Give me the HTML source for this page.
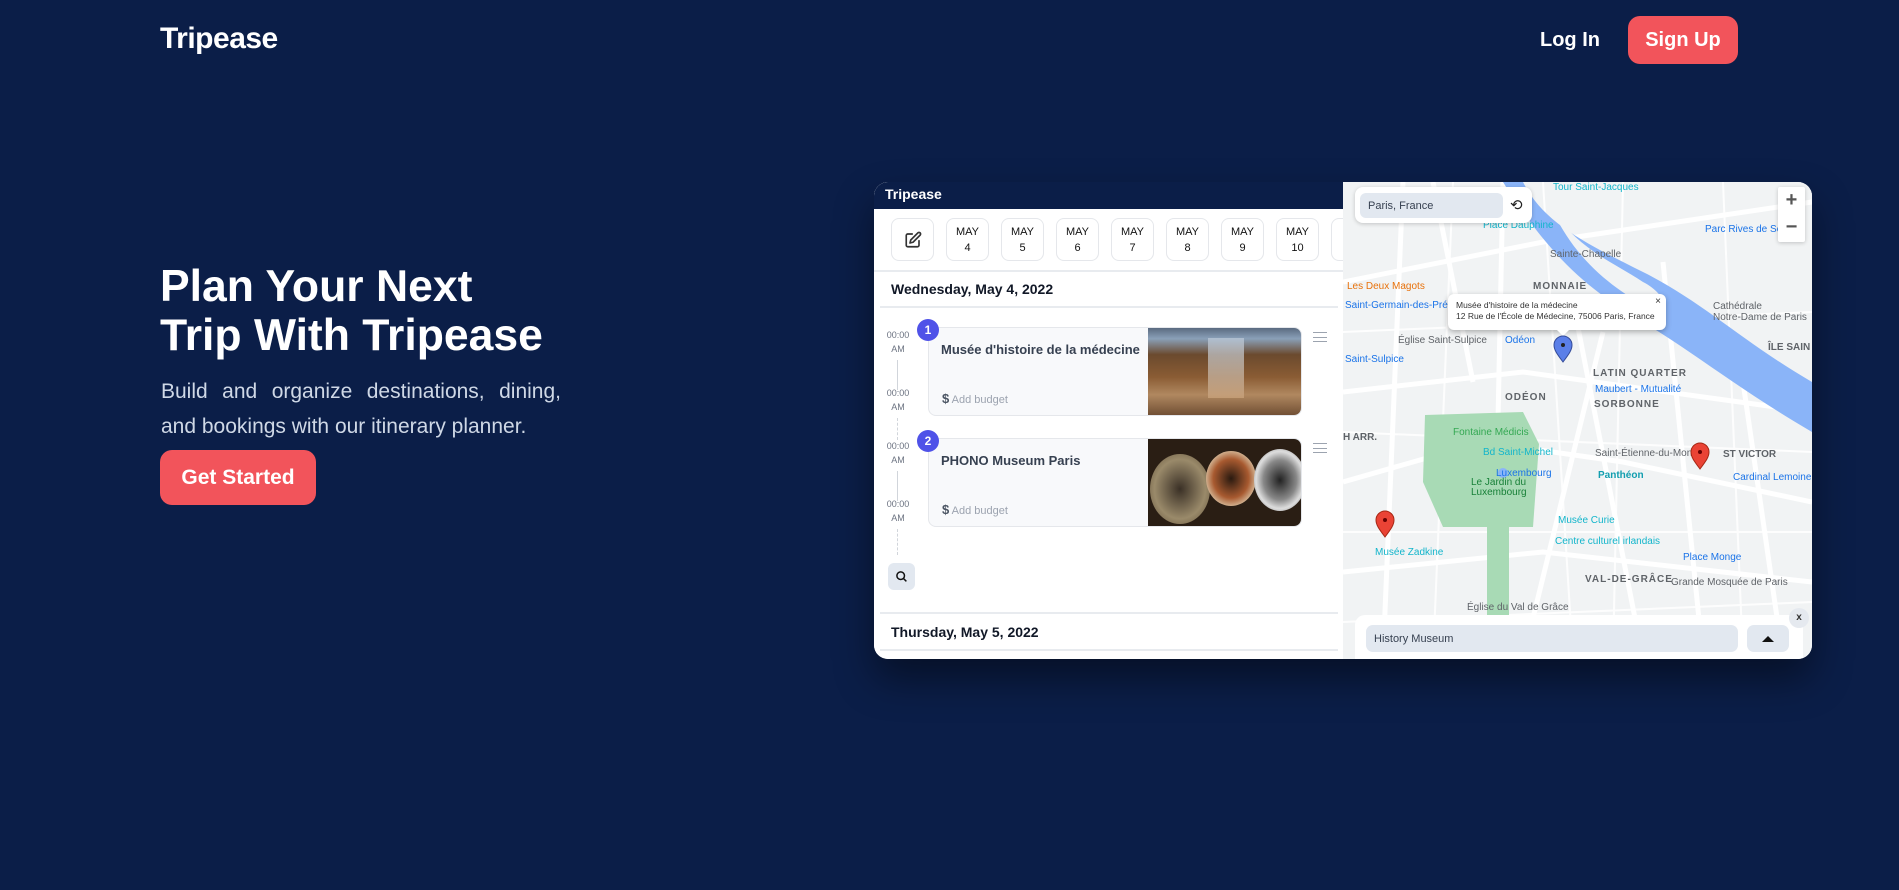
<!DOCTYPE html>
<html><head><meta charset="utf-8"><style>
*{margin:0;padding:0;box-sizing:border-box}
body{width:1899px;height:890px;background:#0b1e48;font-family:"Liberation Sans",sans-serif;position:relative;overflow:hidden;color:#fff}
.abs{position:absolute}
.logo{left:160px;top:22px;font-size:30px;font-weight:bold;letter-spacing:-0.5px}
.login{left:1540px;top:29px;font-size:20px;font-weight:bold}
.signup{left:1628px;top:16px;width:110px;height:48px;background:#f2545b;border-radius:12px;font-size:20px;font-weight:bold;text-align:center;line-height:48px}
h1{position:absolute;left:160px;top:262px;font-size:44.5px;line-height:49px;font-weight:bold}
.para{left:161px;top:374px;width:400px;font-size:21px;line-height:35px;color:#cfd8e6;text-align:justify;text-align-last:left}
.gs{left:160px;top:450px;width:156px;height:55px;background:#f2545b;border-radius:12px;font-size:21px;font-weight:bold;text-align:center;line-height:55px}
.app{left:874px;top:182px;width:938px;height:477px;border-radius:14px;overflow:hidden;background:#fff;box-shadow:0 20px 40px rgba(0,0,0,.45)}
.left{position:absolute;left:0;top:0;width:469px;height:477px;background:#fff;color:#1f2937}
.hdr{position:absolute;left:0;top:0;width:469px;height:27px;background:#0b1e48;color:#fff;font-size:14px;font-weight:bold;padding:4px 11px}
.chip{position:absolute;top:36px;width:43px;height:43px;border:1px solid #e5e7eb;border-radius:8px;font-size:11px;text-align:center;line-height:16px;padding-top:5px;color:#111}
.line{position:absolute;left:0;height:2px;background:#e8ebef}
.day{position:absolute;left:17px;font-size:14px;font-weight:bold;color:#111827}
.time{position:absolute;left:4px;width:40px;text-align:center;font-size:9px;color:#6b7280;line-height:14px}
.card{position:absolute;left:54px;width:374px;height:89px;border:1px solid #e5e7eb;border-radius:8px;background:#f8f9fb;overflow:hidden}
.card .t{position:absolute;left:12px;top:14px;font-size:13px;font-weight:bold;color:#374151}
.card .b{position:absolute;left:13px;top:63px;font-size:11px;color:#9ca3af}
.card .b span{color:#4b5563;font-size:13px;font-weight:bold}
.card .img{position:absolute;left:219px;top:0;width:155px;height:89px}
.badge{position:absolute;left:43px;width:22px;height:22px;border-radius:50%;background:#4f52e8;color:#fff;font-size:12px;font-weight:bold;text-align:center;line-height:22px}
.ham{position:absolute;left:439px;width:14px;height:10px;border-top:1px solid #9ca3af;border-bottom:1px solid #9ca3af}
.ham:after{content:"";position:absolute;left:0;top:4px;width:14px;border-top:1px solid #9ca3af}
.map{position:absolute;left:469px;top:0;width:469px;height:477px;background:#f1f3f4;overflow:hidden}
.ml{position:absolute;font-size:10px;white-space:nowrap}
</style></head><body>
<div class="abs logo">Tripease</div>
<div class="abs login">Log In</div>
<div class="abs signup">Sign Up</div>
<h1>Plan Your Next<br>Trip With Tripease</h1>
<div class="abs para">Build and organize destinations, dining, and bookings with our itinerary planner.</div>
<div class="abs gs">Get Started</div>

<div class="abs app">
 <div class="left">
  <div class="hdr">Tripease</div>
  <div class="chip" style="left:17px;padding-top:12px"><svg width="18" height="18" viewBox="0 0 24 24" fill="none" stroke="#333" stroke-width="2.2" stroke-linecap="round" stroke-linejoin="round"><path d="M11 4H5a2 2 0 0 0-2 2v13a2 2 0 0 0 2 2h13a2 2 0 0 0 2-2v-6"/><path d="M18.5 2.5a2.1 2.1 0 0 1 3 3L12 15l-4 1 1-4z"/></svg></div>
  <div class="chip" style="left:72px">MAY<br>4</div>
  <div class="chip" style="left:127px">MAY<br>5</div>
  <div class="chip" style="left:182px">MAY<br>6</div>
  <div class="chip" style="left:237px">MAY<br>7</div>
  <div class="chip" style="left:292px">MAY<br>8</div>
  <div class="chip" style="left:347px">MAY<br>9</div>
  <div class="chip" style="left:402px">MAY<br>10</div>
  <div class="chip" style="left:457px"></div>
  <div class="line" style="top:88px;width:469px"></div>
  <div class="day" style="top:99px">Wednesday, May 4, 2022</div>
  <div class="line" style="top:124px;left:6px;width:458px"></div>
  <div class="time" style="top:146px">00:00<br>AM</div>
  <div class="abs" style="left:23px;top:178px;height:30px;border-left:1px solid #d1d5db"></div>
  <div class="time" style="top:204px">00:00<br>AM</div>
  <div class="abs" style="left:23px;top:236px;height:22px;border-left:1px dashed #d1d5db"></div>
  <div class="time" style="top:257px">00:00<br>AM</div>
  <div class="abs" style="left:23px;top:289px;height:30px;border-left:1px solid #d1d5db"></div>
  <div class="time" style="top:315px">00:00<br>AM</div>
  <div class="abs" style="left:23px;top:347px;height:26px;border-left:1px dashed #d1d5db"></div>
  <div class="card" style="top:145px"><div class="t">Musée d'histoire de la médecine</div><div class="b"><span>$</span> Add budget</div>
   <div class="img" style="background:linear-gradient(180deg,#5a6a80 0%,#8aa0b8 12%,#6b4a2e 30%,#8a5c34 55%,#b08860 75%,#6b4a30 100%)"><div style="position:absolute;left:60px;top:10px;width:36px;height:60px;background:linear-gradient(#b8c6d6,#c9a27a);opacity:.8"></div></div></div>
  <div class="badge" style="top:137px">1</div>
  <div class="ham" style="top:150px"></div>
  <div class="card" style="top:256px"><div class="t">PHONO Museum Paris</div><div class="b"><span>$</span> Add budget</div>
   <div class="img" style="background:#2a1e14"><div style="position:absolute;left:2px;top:15px;width:60px;height:70px;border-radius:50%;background:radial-gradient(#3a3026,#9a8a6a 60%,#5a4a34)"></div><div style="position:absolute;left:58px;top:12px;width:50px;height:55px;border-radius:50%;background:radial-gradient(#2a1a10,#a85a30 50%,#d8c0a0 75%,#4a3020)"></div><div style="position:absolute;left:106px;top:10px;width:52px;height:62px;border-radius:50%;background:radial-gradient(#222,#888 45%,#ddd 65%,#555)"></div></div></div>
  <div class="badge" style="top:248px">2</div>
  <div class="ham" style="top:261px"></div>
  <div class="abs" style="left:14px;top:381px;width:27px;height:27px;background:#e2e8f0;border-radius:6px"><svg style="margin:7px" width="13" height="13" viewBox="0 0 24 24" fill="none" stroke="#111" stroke-width="2.8"><circle cx="10.5" cy="10.5" r="7"/><path d="M16 16l5 5"/></svg></div>
  <div class="line" style="top:430px;left:6px;width:458px"></div>
  <div class="day" style="top:442px">Thursday, May 5, 2022</div>
  <div class="line" style="top:467px;left:6px;width:458px"></div>
 </div>
 <div class="map">
  <svg width="469" height="477" style="position:absolute;left:0;top:0">
   <g stroke="#fff" stroke-width="5" fill="none">
    <path d="M0 100 L200 60 L469 20"/><path d="M0 210 L180 190 L469 230"/><path d="M0 300 L140 260 L280 280 L469 320"/>
    <path d="M60 0 L40 477"/><path d="M160 0 L150 477"/><path d="M230 120 L300 477"/><path d="M260 150 L180 477"/>
    <path d="M320 80 L360 477"/><path d="M400 200 L440 477"/><path d="M0 390 L200 370 L469 400"/><path d="M90 0 L130 200"/>
   </g>
   <g stroke="#fff" stroke-width="2" fill="none" opacity=".9">
    <path d="M0 150 L469 130"/><path d="M0 250 L469 270"/><path d="M110 0 L90 477"/><path d="M200 0 L230 477"/><path d="M280 0 L270 477"/><path d="M0 350 L469 350"/><path d="M380 0 L400 477"/><path d="M0 440 L469 420"/>
   </g>
   <path d="M180 0 C200 40 240 60 300 90 C360 120 400 160 469 200 L469 250 C400 210 350 170 300 140 C250 110 210 80 160 0Z" fill="#8ab4f8"/>
   <path d="M210 30 C240 70 270 80 300 100 C320 110 330 130 310 130 C280 110 240 90 210 30Z" fill="#f1f3f4"/>
   <path d="M82 233 L180 230 L196 262 L190 345 L100 345 L80 300Z" fill="#a8dab5"/>
   <rect x="144" y="345" width="22" height="90" fill="#a8dab5"/>
   <circle cx="160" cy="291" r="5" fill="#8ab4f8"/>
  </svg>
  <div class="ml" style="left:4px;top:99px;color:#e8710a">Les Deux Magots</div>
  <div class="ml" style="left:2px;top:118px;color:#1a73e8">Saint-Germain-des-Prés</div>
  <div class="ml" style="left:2px;top:172px;color:#1a73e8">Saint-Sulpice</div>
  <div class="ml" style="left:55px;top:153px;color:#5f6368">Église Saint-Sulpice</div>
  <div class="ml" style="left:162px;top:153px;color:#1a73e8">Odéon</div>
  <div class="ml" style="left:190px;top:99px;color:#5f6368;font-weight:bold;letter-spacing:1px">MONNAIE</div>
  <div class="ml" style="left:250px;top:186px;color:#5f6368;font-weight:bold;letter-spacing:1px">LATIN QUARTER</div>
  <div class="ml" style="left:162px;top:210px;color:#5f6368;font-weight:bold;letter-spacing:1px">ODÉON</div>
  <div class="ml" style="left:251px;top:217px;color:#5f6368;font-weight:bold;letter-spacing:1px">SORBONNE</div>
  <div class="ml" style="left:252px;top:202px;color:#1a73e8">Maubert - Mutualité</div>
  <div class="ml" style="left:207px;top:67px;color:#5f6368">Sainte-Chapelle</div>
  <div class="ml" style="left:140px;top:38px;color:#12b5cb">Place Dauphine</div>
  <div class="ml" style="left:210px;top:0px;color:#12b5cb">Tour Saint-Jacques</div>
  <div class="ml" style="left:362px;top:42px;color:#1a73e8">Parc Rives de Sei</div>
  <div class="ml" style="left:370px;top:119px;color:#5f6368">Cathédrale<br>Notre-Dame de Paris</div>
  <div class="ml" style="left:425px;top:160px;color:#5f6368;font-weight:bold">ÎLE SAIN</div>
  <div class="ml" style="left:110px;top:245px;color:#34a853">Fontaine Médicis</div>
  <div class="ml" style="left:140px;top:265px;color:#12b5cb">Bd Saint-Michel</div>
  <div class="ml" style="left:153px;top:286px;color:#1a73e8">Luxembourg</div>
  <div class="ml" style="left:128px;top:296px;color:#188038;line-height:10px">Le Jardin du<br>Luxembourg</div>
  <div class="ml" style="left:252px;top:266px;color:#5f6368">Saint-Étienne-du-Mont</div>
  <div class="ml" style="left:255px;top:288px;color:#129eaf;font-weight:bold">Panthéon</div>
  <div class="ml" style="left:380px;top:267px;color:#5f6368;font-weight:bold">ST VICTOR</div>
  <div class="ml" style="left:390px;top:290px;color:#1a73e8">Cardinal Lemoine</div>
  <div class="ml" style="left:0px;top:250px;color:#5f6368;font-weight:bold">H ARR.</div>
  <div class="ml" style="left:215px;top:333px;color:#12b5cb">Musée Curie</div>
  <div class="ml" style="left:212px;top:354px;color:#12b5cb">Centre culturel irlandais</div>
  <div class="ml" style="left:32px;top:365px;color:#12b5cb">Musée Zadkine</div>
  <div class="ml" style="left:340px;top:370px;color:#1a73e8">Place Monge</div>
  <div class="ml" style="left:242px;top:392px;color:#5f6368;font-weight:bold;letter-spacing:1px">VAL-DE-GRÂCE</div>
  <div class="ml" style="left:328px;top:395px;color:#5f6368">Grande Mosquée de Paris</div>
  <div class="ml" style="left:124px;top:420px;color:#5f6368">Église du Val de Grâce</div>
  <div class="abs" style="left:12px;top:5px;width:177px;height:36px;background:#fff;border-radius:8px;box-shadow:0 1px 4px rgba(0,0,0,.2)"><div class="abs" style="left:5px;top:6px;width:143px;height:25px;background:#e2e8f0;border-radius:6px;font-size:11px;color:#374151;padding:7px 8px">Paris, France</div><div class="abs" style="left:155px;top:9px;font-size:15px;color:#222">⟲</div></div>
  <div class="abs" style="left:435px;top:5px;width:27px;height:55px;background:#fff;border-radius:2px;box-shadow:0 1px 4px rgba(0,0,0,.2);color:#555;font-size:20px;font-weight:bold;text-align:center;line-height:27px">+<br>−</div>
  <div class="abs" style="left:105px;top:112px;width:218px;height:36px;background:#fff;border-radius:6px;box-shadow:0 2px 6px rgba(0,0,0,.3);font-size:8.5px;color:#333;padding:6px 8px;line-height:11px;white-space:nowrap">Musée d'histoire de la médecine<br>12 Rue de l'École de Médecine, 75006 Paris, France<span style="position:absolute;right:5px;top:2px;font-size:10px">×</span></div>
  <svg class="abs" style="left:0;top:0" width="469" height="477">
   <path d="M214 148 L220 154 L226 148Z" fill="#fff"/>
   <path d="M220 180 C214 172 211 168 211 163 A9 9 0 0 1 229 163 C229 168 226 172 220 180Z" fill="#5b7fe8" stroke="#344b99"/><circle cx="220" cy="163" r="2" fill="#222"/>
   <path d="M357 287 C351 279 348 275 348 270 A9 9 0 0 1 366 270 C366 275 363 279 357 287Z" fill="#ea4335" stroke="#a52714"/><circle cx="357" cy="270" r="2" fill="#600"/>
   <path d="M42 355 C36 347 33 343 33 338 A9 9 0 0 1 51 338 C51 343 48 347 42 355Z" fill="#ea4335" stroke="#a52714"/><circle cx="42" cy="338" r="2" fill="#600"/>
  </svg>
  <div class="abs" style="left:12px;top:433px;width:448px;height:44px;background:#fff;border-radius:10px 10px 0 0"><div class="abs" style="left:11px;top:10px;width:372px;height:27px;background:#e2e8f0;border-radius:7px;font-size:11px;color:#374151;padding:8px 8px">History Museum</div><div class="abs" style="left:392px;top:10px;width:42px;height:27px;background:#e2e8f0;border-radius:7px"><div style="margin:11px auto 0;width:0;height:0;border-left:6px solid transparent;border-right:6px solid transparent;border-bottom:6px solid #111"></div></div></div>
  <div class="abs" style="left:446px;top:426px;width:20px;height:20px;border-radius:50%;background:#e5e9ef;font-size:10px;color:#333;text-align:center;line-height:20px;font-weight:bold">x</div>
 </div>
</div>
</body></html>
